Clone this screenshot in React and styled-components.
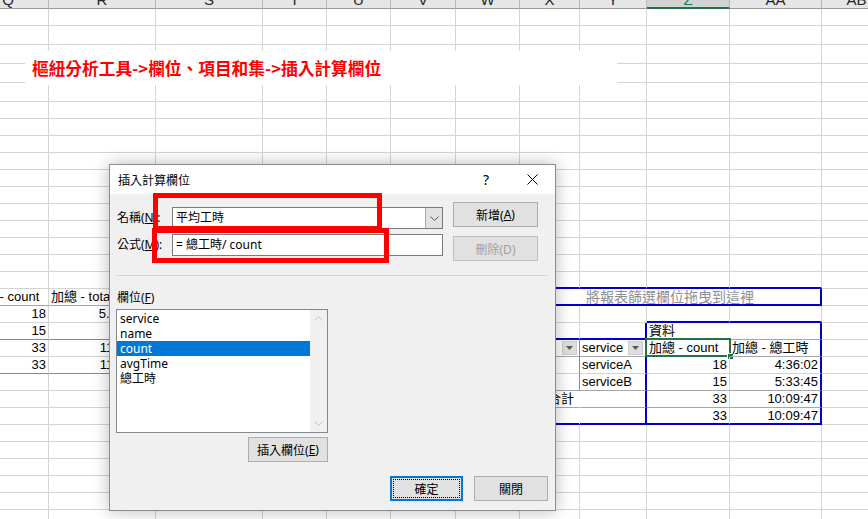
import React from 'react';
import styled, { createGlobalStyle } from 'styled-components';

const GlobalStyle = createGlobalStyle`
  html, body { margin: 0; padding: 0; background: #fff; }
  body { overflow: hidden; }
`;

const GRID = '#d4d4d4';
const BLUE = '#0000c8';
const MID = '#a6a6a6';
const DARK = '#8a8a8a';
const CELL_FONT = '"Liberation Sans", "Noto Sans CJK TC", Arial, sans-serif';
const UI_FONT = '"Noto Sans", "Noto Sans CJK TC", sans-serif';

const COLS = [
  ['Q', 81], ['R', 107], ['S', 107], ['T', 64], ['U', 64], ['V', 65],
  ['W', 64], ['X', 60], ['Y', 67], ['Z', 83], ['AA', 92], ['AB', 70],
];
const ROW_HEIGHTS = [17, 19, 19, 19, 19, 17, ...Array(24).fill(17)];

const line = (c, w = 1) => `${w}px solid ${c}`;
const NONE = '1px solid transparent';

const SPECIAL = {
  '16:7': { bb: line(BLUE, 2) },
  '16:8': { bb: line(BLUE, 2) },
  '16:9': { bb: line(BLUE, 2) },
  '16:10': { bb: line(BLUE, 2) },

  '17:0': { text: '加總 - count', bb: line(MID) },
  '17:1': { text: '加總 - total', bb: line(MID) },
  '17:6': { br: line(BLUE, 2) },
  '17:7': { span: 4, text: '將報表篩選欄位拖曳到這裡', align: 'center', color: '#8f8f8f', fs: 14, bb: line(BLUE, 2), br: line(BLUE, 2) },

  '18:0': { text: '18', align: 'right' },
  '18:1': { text: '5.600556', align: 'right' },
  '18:9': { bb: line(BLUE, 2) },
  '18:10': { bb: line(BLUE, 2) },

  '19:0': { text: '15', align: 'right', bb: line(DARK) },
  '19:1': { text: '5.5625', align: 'right', bb: line(DARK) },
  '19:7': { bb: line(BLUE, 2) },
  '19:8': { bb: line(BLUE, 2), br: line(BLUE, 2) },
  '19:9': { text: '資料', br: NONE, bb: line(MID) },
  '19:10': { br: line(BLUE, 2), bb: line(MID) },

  '20:0': { text: '33', align: 'right' },
  '20:1': { text: '11.16306', align: 'right' },
  '20:7': { filter: true, br: line(DARK), bb: line(MID) },
  '20:8': { text: 'service', filter: true, br: line(BLUE, 2), bb: line(MID) },
  '20:9': { text: '加總 - count', active: true, bb: line(MID) },
  '20:10': { text: '加總 - 總工時', br: line(BLUE, 2), bb: line(MID) },

  '21:0': { text: '33', align: 'right', bb: line(DARK) },
  '21:1': { text: '11.16306', align: 'right', bb: line(DARK) },
  '21:7': { text: 'A', br: line(DARK) },
  '21:8': { text: 'serviceA', br: line(BLUE, 2) },
  '21:9': { text: '18', align: 'right' },
  '21:10': { text: '4:36:02', align: 'right', br: line(BLUE, 2) },

  '22:7': { br: line(DARK), bb: line(MID) },
  '22:8': { text: 'serviceB', br: line(BLUE, 2), bb: line(MID) },
  '22:9': { text: '15', align: 'right', bb: line(MID) },
  '22:10': { text: '5:33:45', align: 'right', br: line(BLUE, 2), bb: line(MID) },

  '23:7': { text: '全部合計', br: NONE, bb: line(MID) },
  '23:8': { br: line(BLUE, 2), bb: line(MID) },
  '23:9': { text: '33', align: 'right', bb: line(MID) },
  '23:10': { text: '10:09:47', align: 'right', br: line(BLUE, 2), bb: line(MID) },

  '24:7': { text: '總計', br: NONE, bb: line(BLUE, 2) },
  '24:8': { br: line(BLUE, 2), bb: line(BLUE, 2) },
  '24:9': { text: '33', align: 'right', bb: line(BLUE, 2) },
  '24:10': { text: '10:09:47', align: 'right', br: line(BLUE, 2), bb: line(BLUE, 2) },
};

const Page = styled.div`
  position: relative;
  width: 868px;
  height: 519px;
  overflow: hidden;
  background: #fff;
`;

const Sheet = styled.div`
  margin-left: -32px;
  display: flex;
  flex-direction: column;
  font-family: ${CELL_FONT};
  font-size: 13px;
  color: #000;
`;

const HeaderRow = styled.div`
  display: flex;
  height: 9px;
`;

const ColHead = styled.div`
  flex: 0 0 ${(p) => p.$w}px;
  box-sizing: border-box;
  height: 9px;
  overflow: hidden;
  display: flex;
  justify-content: center;
  align-items: flex-end;
  background: ${(p) => (p.$sel ? '#d2d2d2' : '#e6e6e6')};
  border-right: 1px solid #b8b8b8;
  border-bottom: ${(p) => (p.$sel ? '2px solid #217346' : '1px solid #9b9b9b')};
  color: ${(p) => (p.$sel ? '#217346' : '#262626')};
  font-size: 15px;
  span {
    line-height: 15px;
    margin-bottom: ${(p) => (p.$sel ? 0 : 1)}px;
  }
`;

const Row = styled.div`
  display: flex;
  height: ${(p) => p.$h}px;
`;

const Cell = styled.div`
  position: relative;
  flex: 0 0 ${(p) => p.$w}px;
  box-sizing: border-box;
  height: 100%;
  display: flex;
  align-items: center;
  justify-content: ${(p) => (p.$align === 'right' ? 'flex-end' : p.$align === 'center' ? 'center' : 'flex-start')};
  padding: 0 2px;
  white-space: nowrap;
  line-height: 16px;
  border-right: ${(p) => p.$br || `1px solid ${GRID}`};
  border-bottom: ${(p) => p.$bb || `1px solid ${GRID}`};
  color: ${(p) => p.$color || '#000'};
  font-size: ${(p) => p.$fs || 13}px;
`;

const FilterBtn = styled.div`
  margin-left: auto;
  width: 15px;
  height: 14px;
  box-sizing: border-box;
  background: #dedede;
  border: 1px solid #cdcdcd;
  display: flex;
  align-items: center;
  justify-content: center;
  flex: 0 0 auto;
`;

const ActiveFrame = styled.div`
  position: absolute;
  left: -2px;
  top: -2px;
  right: -2px;
  bottom: -1px;
  border: 2px solid #217346;
  pointer-events: none;
`;

const FillHandle = styled.div`
  position: absolute;
  right: -5px;
  bottom: -5px;
  width: 5px;
  height: 5px;
  background: #217346;
  border: 1px solid #fff;
`;

const Callout = styled.div`
  position: absolute;
  left: 25px;
  top: 51px;
  width: 592px;
  height: 34px;
  box-sizing: border-box;
  padding-left: 7px;
  background: #fff;
  display: flex;
  align-items: center;
  color: #ff0000;
  font-weight: 700;
  font-size: 16.7px;
  font-family: "Noto Sans CJK TC", sans-serif;
  white-space: nowrap;
`;

const Dialog = styled.div`
  position: absolute;
  left: 109px;
  top: 164px;
  width: 447px;
  height: 347px;
  box-sizing: border-box;
  border: 1px solid #8c8c8c;
  background: #f0f0f0;
  box-shadow: 0 0 16px rgba(0, 0, 0, 0.28);
  display: flex;
  flex-direction: column;
  font-family: ${UI_FONT};
  font-size: 12px;
  color: #000;
`;

const TitleBar = styled.div`
  flex: 0 0 29px;
  background: #fff;
  display: flex;
  align-items: center;
`;

const Title = styled.div`
  flex: 1;
  padding-left: 8px;
`;

const TitleBtn = styled.div`
  width: 46px;
  height: 29px;
  display: flex;
  align-items: center;
  justify-content: center;
  font-size: 14px;
`;

const Body = styled.div`
  flex: 1;
  display: flex;
  flex-direction: column;
  padding: 8px 7px 0 7px;
`;

const FormRow = styled.div`
  display: flex;
  height: 27px;
  margin-top: ${(p) => p.$mt || 0}px;
`;

const Label = styled.div`
  width: 55px;
  height: 22px;
  line-height: 22px;
  white-space: nowrap;
  align-self: ${(p) => p.$self || 'flex-start'};
`;

const U = styled.span`
  text-decoration: underline;
`;

const Combo = styled.div`
  width: 271px;
  height: 22px;
  box-sizing: border-box;
  border: 1px solid #7a7a7a;
  background: #fff;
  display: flex;
  align-self: ${(p) => p.$self || 'flex-start'};
`;

const FieldText = styled.div`
  flex: 1;
  padding-left: 3px;
  line-height: 20px;
  white-space: nowrap;
`;

const DropBtn = styled.div`
  width: 16px;
  background: #e1e1e1;
  border-left: 1px solid #adadad;
  display: flex;
  align-items: center;
  justify-content: center;
`;

const Btn = styled.div`
  position: relative;
  box-sizing: border-box;
  width: ${(p) => p.$w}px;
  height: 25px;
  margin-left: ${(p) => p.$ml || 0}px;
  margin-top: ${(p) => p.$mt || 0}px;
  align-self: ${(p) => p.$self || 'flex-start'};
  display: flex;
  align-items: center;
  justify-content: center;
  background: #e1e1e1;
  border: ${(p) => (p.$default ? '2px solid #0078d7' : `1px solid ${p.$disabled ? '#bfbfbf' : '#adadad'}`)};
  color: ${(p) => (p.$disabled ? '#a0a0a0' : '#000')};
  white-space: nowrap;
`;

const Focus = styled.div`
  box-sizing: border-box;
  width: calc(100% - 2px);
  height: calc(100% - 2px);
  border: 1px dotted #000;
  display: flex;
  align-items: center;
  justify-content: center;
`;

const Separator = styled.div`
  margin-top: 14px;
  height: 1px;
  background: #d5d5d5;
`;

const FieldsLabel = styled.div`
  margin-top: 14px;
  height: 16px;
  line-height: 16px;
`;

const ListColumn = styled.div`
  width: 212px;
  margin-left: -1px;
  margin-top: 3px;
  display: flex;
  flex-direction: column;
`;

const ListBox = styled.div`
  height: 124px;
  box-sizing: border-box;
  border: 1px solid #828790;
  background: #fff;
  display: flex;
`;

const Items = styled.div`
  flex: 1;
  padding-top: 1px;
`;

const Item = styled.div`
  height: 15px;
  line-height: 15px;
  padding-left: 3px;
  background: ${(p) => (p.$sel ? '#0078d7' : 'transparent')};
  color: ${(p) => (p.$sel ? '#fff' : '#000')};
  white-space: nowrap;
`;

const ScrollBar = styled.div`
  width: 17px;
  background: #f0f0f0;
  display: flex;
  flex-direction: column;
  justify-content: space-between;
  align-items: center;
  padding: 6px 0;
  box-sizing: border-box;
`;

const BottomBar = styled.div`
  display: flex;
  justify-content: flex-end;
  gap: 11px;
  margin-top: 14px;
`;

const Mark = styled.div`
  position: absolute;
  box-sizing: border-box;
  border: 5px solid #ff0000;
  left: ${(p) => p.$x}px;
  top: ${(p) => p.$y}px;
  width: ${(p) => p.$w}px;
  height: ${(p) => p.$h}px;
  pointer-events: none;
`;

const Chevron = ({ up, color = '#606060' }) => (
  <svg width="9" height="5" viewBox="0 0 9 5">
    <path d={up ? 'M0.5 4.5 L4.5 0.5 L8.5 4.5' : 'M0.5 0.5 L4.5 4.5 L8.5 0.5'} fill="none" stroke={color} strokeWidth="1" />
  </svg>
);

const Tri = () => (
  <svg width="7" height="4" viewBox="0 0 7 4">
    <path d="M0 0 L7 0 L3.5 4 Z" fill="#595959" />
  </svg>
);

function SheetGrid() {
  const rows = [];
  ROW_HEIGHTS.forEach((h, i) => {
    const r = i + 1;
    const cells = [];
    for (let c = 0; c < COLS.length; c++) {
      const spec = SPECIAL[`${r}:${c}`] || {};
      let w = COLS[c][1];
      const span = spec.span || 1;
      for (let k = 1; k < span; k++) w += COLS[c + k][1];
      cells.push(
        <Cell key={c} $w={w} $align={spec.align} $br={spec.br} $bb={spec.bb} $color={spec.color} $fs={spec.fs}>
          {spec.text}
          {spec.filter && (
            <FilterBtn>
              <Tri />
            </FilterBtn>
          )}
          {spec.active && (
            <ActiveFrame>
              <FillHandle />
            </ActiveFrame>
          )}
        </Cell>
      );
      c += span - 1;
    }
    rows.push(
      <Row key={r} $h={h}>
        {cells}
      </Row>
    );
  });
  return (
    <Sheet>
      <HeaderRow>
        {COLS.map(([k, w]) => (
          <ColHead key={k} $w={w} $sel={k === 'Z'}>
            <span>{k}</span>
          </ColHead>
        ))}
      </HeaderRow>
      {rows}
    </Sheet>
  );
}

function CalcFieldDialog() {
  return (
    <Dialog>
      <TitleBar>
        <Title>插入計算欄位</Title>
        <TitleBtn>?</TitleBtn>
        <TitleBtn>
          <svg width="11" height="11" viewBox="0 0 11 11">
            <path d="M0.5 0.5 L10.5 10.5 M10.5 0.5 L0.5 10.5" stroke="#000" strokeWidth="1" />
          </svg>
        </TitleBtn>
      </TitleBar>
      <Body>
        <FormRow>
          <Label $self="flex-end">
            名稱(<U>N</U>):
          </Label>
          <Combo $self="flex-end">
            <FieldText>平均工時</FieldText>
            <DropBtn>
              <Chevron />
            </DropBtn>
          </Combo>
          <Btn $w={85} $ml={10}>
            新增(<U>A</U>)
          </Btn>
        </FormRow>
        <FormRow $mt={5}>
          <Label>
            公式(<U>M</U>):
          </Label>
          <Combo>
            <FieldText>= 總工時/ count</FieldText>
          </Combo>
          <Btn $w={85} $ml={10} $mt={2} $disabled>
            刪除(D)
          </Btn>
        </FormRow>
        <Separator />
        <FieldsLabel>
          欄位(<U>F</U>)
        </FieldsLabel>
        <ListColumn>
          <ListBox>
            <Items>
              <Item>service</Item>
              <Item>name</Item>
              <Item $sel>count</Item>
              <Item>avgTime</Item>
              <Item>總工時</Item>
            </Items>
            <ScrollBar>
              <Chevron up color="#c2c2c2" />
              <Chevron color="#c2c2c2" />
            </ScrollBar>
          </ListBox>
          <Btn $w={80} $mt={4} $self="flex-end">
            插入欄位(<U>E</U>)
          </Btn>
        </ListColumn>
        <BottomBar>
          <Btn $w={73} $default>
            <Focus>確定</Focus>
          </Btn>
          <Btn $w={74}>關閉</Btn>
        </BottomBar>
      </Body>
    </Dialog>
  );
}

export default function App() {
  return (
    <Page>
      <GlobalStyle />
      <SheetGrid />
      <Callout>樞紐分析工具-&gt;欄位、項目和集-&gt;插入計算欄位</Callout>
      <CalcFieldDialog />
      <Mark $x={153} $y={193} $w={229} $h={38} />
      <Mark $x={152} $y={228} $w={237} $h={35} />
    </Page>
  );
}
